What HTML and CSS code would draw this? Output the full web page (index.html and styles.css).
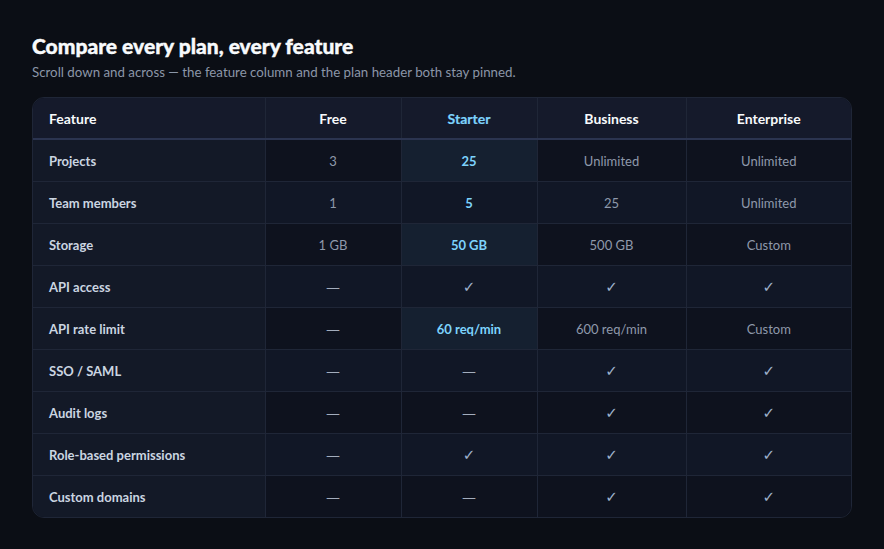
FILE: index.html
```html
<!DOCTYPE html>
<html lang="en">
<head>
    <meta charset="UTF-8">
    <meta name="viewport" content="width=device-width, initial-scale=1.0">
    <title>Compare plans</title>
    <link rel="stylesheet" href="styles.css">
</head>
<body>
    <h1>Compare every plan, every feature</h1>
    <p class="lead">Scroll down and across — the feature column and the plan header both stay pinned.</p>

    <div class="table-wrap">
        <table class="compare">
            <colgroup>
                <col class="col-feature">
                <col class="col-free">
                <col class="col-starter">
                <col class="col-business">
                <col>
            </colgroup>
            <thead>
                <tr>
                    <th class="feature">Feature</th>
                    <th>Free</th>
                    <th class="hl">Starter</th>
                    <th>Business</th>
                    <th>Enterprise</th>
                </tr>
            </thead>
            <tbody>
                <tr>
                    <th class="feature">Projects</th>
                    <td>3</td>
                    <td class="hl">25</td>
                    <td>Unlimited</td>
                    <td>Unlimited</td>
                </tr>
                <tr>
                    <th class="feature">Team members</th>
                    <td>1</td>
                    <td class="hl">5</td>
                    <td>25</td>
                    <td>Unlimited</td>
                </tr>
                <tr>
                    <th class="feature">Storage</th>
                    <td>1 GB</td>
                    <td class="hl">50 GB</td>
                    <td>500 GB</td>
                    <td>Custom</td>
                </tr>
                <tr>
                    <th class="feature">API access</th>
                    <td class="no">—</td>
                    <td class="yes">✓</td>
                    <td class="yes">✓</td>
                    <td class="yes">✓</td>
                </tr>
                <tr>
                    <th class="feature">API rate limit</th>
                    <td class="no">—</td>
                    <td class="hl">60 req/min</td>
                    <td>600 req/min</td>
                    <td>Custom</td>
                </tr>
                <tr>
                    <th class="feature">SSO / SAML</th>
                    <td class="no">—</td>
                    <td class="no">—</td>
                    <td class="yes">✓</td>
                    <td class="yes">✓</td>
                </tr>
                <tr>
                    <th class="feature">Audit logs</th>
                    <td class="no">—</td>
                    <td class="no">—</td>
                    <td class="yes">✓</td>
                    <td class="yes">✓</td>
                </tr>
                <tr>
                    <th class="feature">Role-based permissions</th>
                    <td class="no">—</td>
                    <td class="yes">✓</td>
                    <td class="yes">✓</td>
                    <td class="yes">✓</td>
                </tr>
                <tr>
                    <th class="feature">Custom domains</th>
                    <td class="no">—</td>
                    <td class="no">—</td>
                    <td class="yes">✓</td>
                    <td class="yes">✓</td>
                </tr>
            </tbody>
        </table>
    </div>
</body>
</html>
```

FILE: styles.css
```css
body {
    margin: 0;
    padding: 32px;
    background: #0b0e15;
    color: #94a3b8;
    font-family: Lato, "Noto Sans", sans-serif;
}
h1 {
    margin: 3px 0 0;
    font-size: 21px;
    font-weight: 900;
    line-height: 22px;
    color: #f8fafc;
    -webkit-text-stroke: 0.4px #f8fafc;
}
.lead {
    margin: 6px 0 16px;
    font-size: 13.3px;
    line-height: 18px;
    color: #8b96a8;
}
.table-wrap {
    border: 1px solid #1f2637;
    border-radius: 12px;
    overflow: hidden;
}
.compare {
    width: 100%;
    border-collapse: collapse;
    table-layout: fixed;
    font-size: 13px;
}
.col-feature {
    width: 232px;
}
.col-free,
.col-starter {
    width: 136px;
}
.col-business {
    width: 149px;
}
.compare th,
.compare td {
    height: 41px;
    padding: 0 16px;
    text-align: center;
    border-right: 1px solid #1f2637;
    border-bottom: 1px solid #1f2637;
}
.compare tr > :last-child {
    border-right: none;
}
.compare tbody tr:last-child > * {
    border-bottom: none;
}
.compare thead th {
    height: 40px;
    background: #151a2b;
    color: #f8fafc;
    font-size: 14px;
    font-weight: 700;
    border-bottom: 2px solid #2b3450;
}
.compare thead th.hl {
    color: #7dd3fc;
    -webkit-text-stroke: 0.2px #7dd3fc;
}
.compare th.feature {
    text-align: left;
    font-weight: 700;
}
.compare tbody th.feature {
    background: #131927;
    color: #cbd5e1;
}
.compare td {
    background: #0e121e;
    color: #8e99ab;
}
.compare tbody tr:nth-child(even) td {
    background: #111726;
}
.compare tbody td.hl {
    background: #152030;
    color: #7dd3fc;
    font-weight: 700;
}
.compare td.yes {
    font-family: "DejaVu Sans", sans-serif;
    font-size: 15px;
    font-weight: 700;
    color: #9fb2cc;
}
.compare td.no {
    font-family: "DejaVu Sans", sans-serif;
    font-size: 14px;
    color: #a3adbd;
}
```
